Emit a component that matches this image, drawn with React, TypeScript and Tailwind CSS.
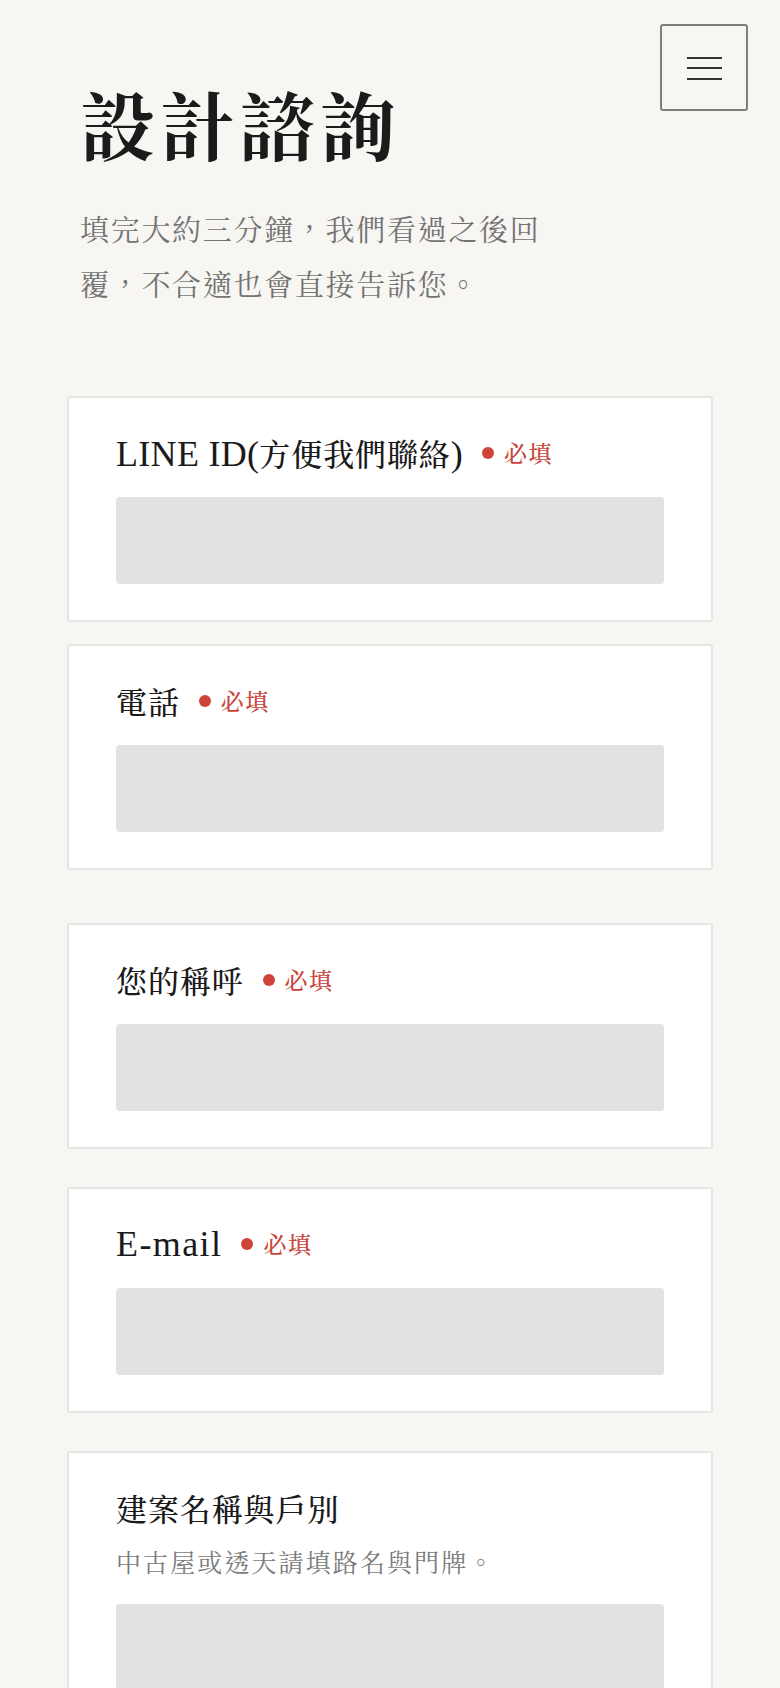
import React from "react";

const serif = "font-['Liberation_Serif','Noto_Serif_CJK_TC','Noto_Sans_CJK_TC',serif]";
const cjk = "font-['Noto_Serif_CJK_TC','Noto_Sans_CJK_TC','Noto_Sans_CJK_SC',sans-serif]";

function Required() {
  return (
    <span className="flex items-center ml-[19px]">
      <span className="block w-[12px] h-[12px] rounded-full bg-[#cf4339]" />
      <span className={`${cjk} ml-[10px] text-[23px] leading-[30px] tracking-[1.5px] font-medium text-[#c8443a]`}>必填</span>
    </span>
  );
}

function Field({
  label,
  required = true,
  hint,
  className = "",
}: {
  label: React.ReactNode;
  required?: boolean;
  hint?: string;
  className?: string;
}) {
  return (
    <div className={`bg-white border-2 border-[#e5e5e3] rounded-[3px] px-[47px] pt-[35px] pb-[36px] ${className}`}>
      <div className="flex items-center h-[40px] text-[#1a1a1a]">
        <span className="flex items-baseline whitespace-nowrap">{label}</span>
        {required && <Required />}
      </div>
      {hint && (
        <div className={`${cjk} mt-[15px] h-[36px] leading-[36px] text-[25px] tracking-[2.1px] text-[#7a7a7a]`}>{hint}</div>
      )}
      <div className={`${hint ? "mt-[25px]" : "mt-[24px]"} h-[87px] rounded-[4px] bg-[#e2e2e2]`} />
    </div>
  );
}

const L = ({ children }: { children: React.ReactNode }) => (
  <span className={`${serif} text-[36px] leading-[40px] tracking-[0.3px]`}>{children}</span>
);
const C = ({ children }: { children: React.ReactNode }) => (
  <span className={`${cjk} text-[31px] leading-[40px] tracking-[0.9px] font-medium`}>{children}</span>
);

export default function App() {
  return (
    <div className="relative min-h-[1688px] bg-[#f7f6f2] overflow-hidden">
      <button
        type="button"
        className="absolute top-[24px] right-[32px] w-[88px] h-[87px] border-2 border-[#7e7e7e] rounded-[3px] flex flex-col items-center justify-center gap-[8.5px] pt-[1px]"
        aria-label="menu"
      >
        <span className="block w-[35px] h-[2px] bg-[#333]" />
        <span className="block w-[35px] h-[2px] bg-[#333]" />
        <span className="block w-[35px] h-[2px] bg-[#333]" />
      </button>

      <div className="pl-[80px] pt-[85px]">
        <h1 className={`${cjk} text-[75px] leading-[75px] font-bold tracking-[5px] text-[#1b1b1b]`}>設計諮詢</h1>
        <p className={`${cjk} mt-[41px] w-[480px] text-[29px] leading-[55px] tracking-[1.7px] text-[#737373]`}>
          填完大約三分鐘，我們看過之後回覆，不合適也會直接告訴您。
        </p>
      </div>

      <div className="mx-[67px] mt-[85px] pb-[40px]">
        <Field
          label={
            <>
              <L>LINE ID(</L>
              <C>方便我們聯絡</C>
              <L>)</L>
            </>
          }
        />
        <Field className="mt-[22px]" label={<C>電話</C>} />
        <Field className="mt-[53px]" label={<C>您的稱呼</C>} />
        <Field className="mt-[38px]" label={<L><span className="tracking-[1.4px]">E-mail</span></L>} />
        <Field
          className="mt-[38px]"
          required={false}
          label={<C>建案名稱與戶別</C>}
          hint="中古屋或透天請填路名與門牌。"
        />
      </div>
    </div>
  );
}
